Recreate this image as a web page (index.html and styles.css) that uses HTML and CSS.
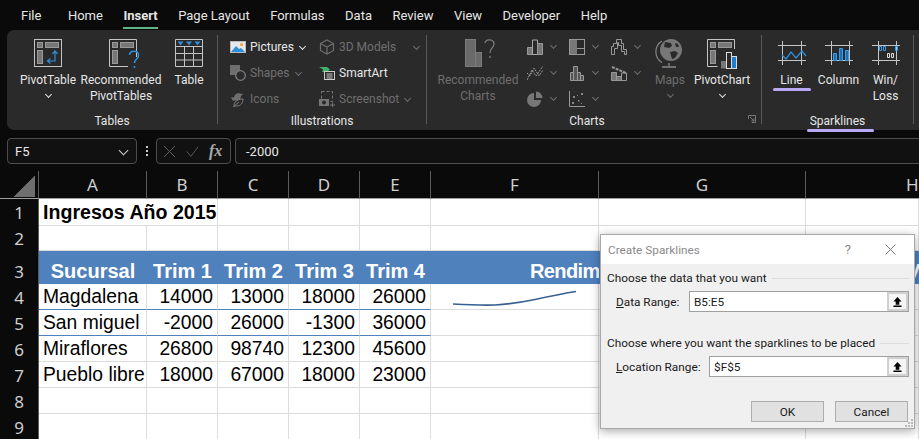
FILE: index.html
```html
<!DOCTYPE html>
<html lang="en">
<head>
    <meta charset="UTF-8">
    <title>Create Sparklines</title>
    <link rel="stylesheet" href="styles.css">
</head>
<body>
    <nav class="tabs">
        <span class="tab tab-file">File</span>
        <span class="tab">Home</span>
        <span class="tab tab-active">Insert</span>
        <span class="tab">Page Layout</span>
        <span class="tab">Formulas</span>
        <span class="tab">Data</span>
        <span class="tab">Review</span>
        <span class="tab">View</span>
        <span class="tab">Developer</span>
        <span class="tab">Help</span>
    </nav>

    <section class="ribbon">
        <div class="group group-tables">
            <div class="group-body">
                <div class="big-btn w-pivot">
                    <svg class="big-icon" viewBox="0 0 28 28"><rect x=".5" y=".5" width="27" height="27" fill="none" stroke="#c4c4c4"/><rect x="3.5" y="3.5" width="5" height="5" fill="#777" stroke="#999"/><rect x="11.5" y="3.5" width="13" height="5" fill="#777" stroke="#999"/><rect x="3.5" y="11.5" width="5" height="13" fill="#777" stroke="#999"/><path d="M21 13v9h-7M18.5 15l2.5-3 2.500 3M16.500 19.500l-3 2.500 3 2.500" fill="none" stroke="#2f8ed8" stroke-width="1.200"/></svg>
                    <span>PivotTable</span>
                    <i class="chev chev-light"></i>
                </div>
                <div class="big-btn w-recommended">
                    <svg class="big-icon icon-wide" viewBox="0 0 32 28"><path d="M27.500 18V.5H.5v27H19" fill="none" stroke="#c4c4c4"/><rect x="3.500" y="3.500" width="5" height="5" fill="#777" stroke="#999"/><rect x="11.500" y="3.500" width="13" height="5" fill="#777" stroke="#999"/><rect x="3.500" y="11.500" width="5" height="13" fill="#777" stroke="#999"/><path d="M20.500 16c.500-5 9-5 9 .5 0 3.500-4 3.500-4 7.500M25.500 27v2" fill="none" stroke="#2f8ed8" stroke-width="1.600"/></svg>
                    <span>Recommended<br>PivotTables</span>
                </div>
                <div class="big-btn w-table">
                    <svg class="big-icon" viewBox="0 0 28 28"><path d="M.5.500h27v27H.5zM.5 7.500h27M.5 14.500h27M.5 21h27M9.500 7.500v20M18.500 7.500v20" fill="none" stroke="#c4c4c4"/><path d="M2.500 2.500h6l-3 4zM11 2.500h6l-3 4zM19.500 2.500h6l-3 4z" fill="#2f8ed8"/></svg>
                    <span>Table</span>
                </div>
            </div>
            <div class="group-label">Tables</div>
        </div>

        <div class="group group-illustrations">
            <div class="group-body">
                <div class="stack stack-illus-1">
                    <div class="small-btn">
                        <svg class="small-icon" viewBox="0 0 16 12"><rect x=".5" y=".5" width="15" height="11" fill="#e8e8e8" stroke="#bbb"/><path d="M1 11l5-6 3 3 2-1 4 4z" fill="#2f8ed8"/><circle cx="11.500" cy="3.500" r="1.500" fill="#e8a33a"/></svg>
                        <span>Pictures</span><i class="chev chev-light"></i>
                    </div>
                    <div class="small-btn muted">
                        <svg class="small-icon" viewBox="0 0 16 16"><rect x="0" y="0" width="10" height="10" fill="#6e6e6e"/><circle cx="10.500" cy="10.500" r="4.800" fill="#2a2a2a" stroke="#7c7c7c" stroke-width="1.300"/></svg>
                        <span>Shapes</span><i class="chev"></i>
                    </div>
                    <div class="small-btn muted">
                        <svg class="small-icon" viewBox="0 0 16 16"><path d="M1 6l3 .500c.500-3 3-5 6-4l3 .500-2 2c0 2-1 4-3 4.500H2.500z" fill="#6e6e6e"/><path d="M4 15c0-4 3-7 9-7 0 4-2 7-6.500 7zM3 16l6-5" fill="#2a2a2a" stroke="#7c7c7c"/></svg>
                        <span>Icons</span>
                    </div>
                </div>
                <div class="stack stack-illus-2">
                    <div class="small-btn muted btn-3d">
                        <svg class="small-icon" viewBox="0 0 16 16"><path d="M8 1l6.500 3.500v7L8 15l-6.500-3.500v-7zM1.500 4.500L8 8l6.500-3.500M8 8v7" fill="none" stroke="#6e6e6e" stroke-width="1.200"/></svg>
                        <span>3D Models</span><i class="chev chev-far"></i>
                    </div>
                    <div class="small-btn">
                        <svg class="small-icon" viewBox="0 0 16 14"><path d="M0 1h8l3 2.500-3 2.500H3l1-2.500z" fill="#3fae6a"/><rect x="5.500" y="5.500" width="10" height="8" fill="#2a2a2a" stroke="#ccc"/><path d="M7.500 8h6M7.500 10h6M7.500 12h6" stroke="#ccc"/></svg>
                        <span>SmartArt</span>
                    </div>
                    <div class="small-btn muted">
                        <svg class="small-icon" viewBox="0 0 16 16"><rect x="2.500" y=".5" width="11" height="10" fill="none" stroke="#777" stroke-dasharray="3 2"/><rect x="0" y="8" width="10" height="7" fill="#777"/><circle cx="5" cy="11.500" r="2" fill="#2a2a2a"/><path d="M11 14h5M13.500 11.500v5" stroke="#777"/></svg>
                        <span>Screenshot</span><i class="chev"></i>
                    </div>
                </div>
            </div>
            <div class="group-label">Illustrations</div>
        </div>

        <div class="group group-charts">
            <div class="group-body">
                <div class="big-btn w-reccharts muted">
                    <svg class="big-icon icon-chart-q" viewBox="0 0 30 28"><rect x=".5" y=".5" width="10" height="27" fill="#6a6a6a" stroke="#7c7c7c"/><rect x="10.500" y="13.500" width="6" height="14" fill="#6a6a6a" stroke="#7c7c7c"/><path d="M20 4c1-4.500 9-4 9 1 0 4-4 4-4 9M25 17v2" fill="none" stroke="#7c7c7c" stroke-width="1.300"/></svg>
                    <span>Recommended<br>Charts</span>
                </div>
                <div class="chart-grid">
                    <div class="chart-btn">
                        <svg class="small-icon" viewBox="0 0 16 16"><path d="M.5 8.500h5v7h-5z" fill="#777" stroke="#999"/><path d="M5.500 1h5v14.500h-5z" fill="none" stroke="#aaa"/><path d="M10.500 4.500h5v11h-5z" fill="#777" stroke="#999"/></svg><i class="chev"></i>
                    </div>
                    <div class="chart-btn">
                        <svg class="small-icon" viewBox="0 0 16 16"><rect x=".5" y=".5" width="15" height="15" fill="none" stroke="#999"/><rect x="1" y="1" width="7" height="14" fill="#777"/><rect x="8" y="9" width="7" height="1" fill="#999"/></svg><i class="chev"></i>
                    </div>
                    <div class="chart-btn">
                        <svg class="small-icon" viewBox="0 0 16 16"><path d="M.5 15.500v-8h2v-3h3v-4h5v4h2v6h3v5h-2v-3h-3v-6h-3v-3h-1v6h-3v6z" fill="none" stroke="#999"/></svg><i class="chev"></i>
                    </div>
                    <div class="chart-btn">
                        <svg class="small-icon" viewBox="0 0 16 16"><path d="M0 15L5 5l4 6 7-10M0 8l3 3 4-8 5 8 4-6" fill="none" stroke="#999" stroke-dasharray="2 1"/></svg><i class="chev"></i>
                    </div>
                    <div class="chart-btn">
                        <svg class="small-icon" viewBox="0 0 16 16"><path d="M1.500 15.500v-8h3v8zM4.500 15.500V1.500h4v14zM8.500 15.500v-8h3v8zM11.500 15.500v-5h3v5z" fill="#555" stroke="#999"/></svg><i class="chev"></i>
                    </div>
                    <div class="chart-btn">
                        <svg class="small-icon" viewBox="0 0 16 16"><path d="M.5 7.500h5v8h-5zM5.500 11.500h5v4h-5z" fill="#777" stroke="#999"/><path d="M10.500 8h5v7.500h-5z" fill="none" stroke="#999"/><path d="M1 2l14 6" stroke="#999" stroke-width="2" stroke-dasharray="3 1"/></svg><i class="chev"></i>
                    </div>
                    <div class="chart-btn">
                        <svg class="small-icon" viewBox="0 0 16 16"><path d="M7 2a7 7 0 1 0 7 7H7z" fill="#777"/><path d="M9 .5a6.500 6.500 0 0 1 6.500 6.500H9z" fill="#777"/></svg><i class="chev"></i>
                    </div>
                    <div class="chart-btn">
                        <svg class="small-icon" viewBox="0 0 16 16"><path d="M.5 0v15.500H16" fill="none" stroke="#999"/><path d="M4 5h2v2H4zM12 2h2v2h-2zM3 11h2v2H3zM9 9h1.500v1.500H9zM8 4h1v1H8zM12 12h1v1h-1z" fill="#888"/></svg><i class="chev"></i>
                    </div>
                </div>
                <div class="big-btn w-maps muted">
                    <svg class="big-icon icon-globe" viewBox="0 0 26 30"><path d="M5 3a12.500 12.500 0 0 0 0 21.500" fill="none" stroke="#888" stroke-width="1.200"/><circle cx="14" cy="12" r="11" fill="#777"/><path d="M8 4l6 1 1 3-3 2-5-1zM13 14l5-1 3 2-3 5-3 1zM18 5l3 1 1 3-3 0z" fill="#2a2a2a"/><path d="M12 25v3M5 29h14" stroke="#888" stroke-width="1.300"/></svg>
                    <span>Maps</span>
                    <i class="chev"></i>
                </div>
                <div class="big-btn w-pchart">
                    <svg class="big-icon icon-pchart" viewBox="0 0 30 30"><path d="M27.500 10V.5H.5v27h10" fill="none" stroke="#c4c4c4"/><rect x="3.500" y="3.500" width="5" height="5" fill="#777" stroke="#999"/><rect x="11.500" y="3.500" width="13" height="5" fill="#777" stroke="#999"/><rect x="3.500" y="11.500" width="5" height="13" fill="#777" stroke="#999"/><rect x="14" y="22" width="5" height="7.500" fill="#777"/><rect x="19.500" y="13.500" width="5" height="16" fill="none" stroke="#ddd"/><rect x="24.500" y="17.500" width="5" height="12" fill="#1f7fcc" stroke="#ddd"/></svg>
                    <span>PivotChart</span>
                    <i class="chev chev-light"></i>
                </div>
            </div>
            <div class="group-label label-charts">Charts</div>
            <svg class="launcher" viewBox="0 0 8 8"><path d="M.5 4V.5H7.500V7.500H4M2 2l4 4M6 3.500V6H3.500" fill="none" stroke="#777"/></svg>
        </div>

        <div class="group group-sparklines">
            <div class="group-body">
                <div class="big-btn w-spark btn-line">
                    <svg class="big-icon spark-icon" viewBox="0 0 28 24"><path d="M0 4.500h28M0 19.500h28M4.500 0v24M23.500 0v24" stroke="#c4c4c4" fill="none"/><path d="M4 14l4 4 5-7 5 6 6-7 4 5" fill="none" stroke="#2f8ed8" stroke-width="1.300"/></svg>
                    <span>Line</span>
                    <i class="mark mark-line"></i>
                </div>
                <div class="big-btn w-spark">
                    <svg class="big-icon spark-icon" viewBox="0 0 28 24"><path d="M0 4.500h28M0 19.500h28M6.500 0v24M24.500 0v24" stroke="#c4c4c4" fill="none"/><path d="M8.500 12.500h3v7h-3zM14.500 7.500h3v12h-3zM20.500 9.500h3v10h-3z" fill="#1c6fb4" stroke="#3a9be6"/></svg>
                    <span>Column</span>
                </div>
                <div class="big-btn w-spark">
                    <svg class="big-icon spark-icon" viewBox="0 0 28 24"><path d="M0 4.500h28M0 19.500h28M6.500 0v24M24.500 0v24" stroke="#c4c4c4" fill="none"/><path d="M7.500 5.500h2v4h-2zM11.500 5.500h2v4h-2zM23.500 5.500h2v4h-2z" fill="none" stroke="#3a9be6"/><path d="M15.500 12.500h2v4h-2zM19.500 12.500h2v4h-2z" fill="none" stroke="#ddd"/></svg>
                    <span>Win/<br>Loss</span>
                </div>
            </div>
            <div class="group-label label-sparklines">Sparklines<i class="mark mark-label"></i></div>
        </div>
    </section>

    <div class="formula-bar">
        <div class="name-box"><span>F5</span><i class="chev chev-name"></i></div>
        <div class="bar-dots"><i></i><i></i><i></i></div>
        <div class="func-box">
            <svg class="func-icon" viewBox="0 0 14 14"><path d="M1 1l12 12M13 1L1 13" stroke="#666" fill="none"/></svg>
            <svg class="func-icon" viewBox="0 0 16 14"><path d="M1 7l5 6L15 1" stroke="#666" fill="none"/></svg>
            <span class="fx">fx</span>
        </div>
        <div class="formula-input">-2000</div>
    </div>

    <table class="sheet">
        <colgroup>
            <col class="c-head"><col class="c-a"><col class="c-n"><col class="c-n"><col class="c-n"><col class="c-n"><col class="c-f"><col class="c-g"><col class="c-h">
        </colgroup>
        <tr class="r-cols">
            <th class="corner"><i class="corner-mark"></i></th><th>A</th><th>B</th><th>C</th><th>D</th><th>E</th><th>F</th><th>G</th><th class="col-h">H</th>
        </tr>
        <tr class="r-1">
            <th class="rh">1</th><td class="title" colspan="2">Ingresos Año 2015</td><td></td><td></td><td></td><td></td><td></td><td></td>
        </tr>
        <tr class="r-2">
            <th class="rh">2</th><td></td><td></td><td></td><td></td><td></td><td></td><td></td><td></td>
        </tr>
        <tr class="r-3">
            <th class="rh">3</th><td>Sucursal</td><td>Trim 1</td><td>Trim 2</td><td>Trim 3</td><td>Trim 4</td><td class="rend">Rendim</td><td></td><td class="next-head">V</td>
        </tr>
        <tr class="line-blue">
            <th class="rh">4</th><td>Magdalena</td><td class="num">14000</td><td class="num">13000</td><td class="num">18000</td><td class="num">26000</td>
            <td class="spark-cell"><svg class="sparkline" viewBox="0 0 128 20"><path d="M2 17C20 18 30 18.500 44 18 60 17 72 15 84 12.500 100 9 112 6.500 125 4.500" fill="none" stroke="#376092" stroke-width="1.600"/></svg></td><td></td><td></td>
        </tr>
        <tr class="line-blue">
            <th class="rh">5</th><td>San miguel</td><td class="num">-2000</td><td class="num">26000</td><td class="num">-1300</td><td class="num">36000</td><td></td><td></td><td></td>
        </tr>
        <tr>
            <th class="rh">6</th><td>Miraflores</td><td class="num">26800</td><td class="num">98740</td><td class="num">12300</td><td class="num">45600</td><td></td><td></td><td></td>
        </tr>
        <tr>
            <th class="rh">7</th><td>Pueblo libre</td><td class="num">18000</td><td class="num">67000</td><td class="num">18000</td><td class="num">23000</td><td></td><td></td><td></td>
        </tr>
        <tr>
            <th class="rh">8</th><td></td><td></td><td></td><td></td><td></td><td></td><td></td><td></td>
        </tr>
        <tr>
            <th class="rh">9</th><td></td><td></td><td></td><td></td><td></td><td></td><td></td><td></td>
        </tr>
    </table>

    <div class="dialog">
        <header class="dialog-title">
            <span class="dialog-name">Create Sparklines</span>
            <span class="dialog-help">?</span>
            <svg class="dialog-close" viewBox="0 0 11 11"><path d="M.5.500l10 10M10.500.500l-10 10" stroke="#777" fill="none"/></svg>
        </header>
        <div class="dialog-body">
            <div class="legend"><span>Choose the data that you want</span><i></i></div>
            <div class="field field-data">
                <label>Data Range:</label>
                <div class="range"><span>B5:E5</span>
                    <div class="range-btn"><svg viewBox="0 0 10 11"><path d="M5 0l4.500 5H7v3.500H3V5H.5zM.5 9.500h9V11h-9z" fill="#000"/></svg></div>
                </div>
            </div>
            <div class="legend legend-2"><span>Choose where you want the sparklines to be placed</span><i></i></div>
            <div class="field field-location">
                <label>Location Range:</label>
                <div class="range"><span>$F$5</span>
                    <div class="range-btn"><svg viewBox="0 0 10 11"><path d="M5 0l4.500 5H7v3.500H3V5H.5zM.5 9.500h9V11h-9z" fill="#000"/></svg></div>
                </div>
            </div>
            <div class="dialog-actions">
                <button class="dlg-btn">OK</button>
                <button class="dlg-btn">Cancel</button>
            </div>
        </div>
        <svg class="grip" viewBox="0 0 8 8"><path d="M6 0h2v2H6zM3 3h2v2H3zM6 3h2v2H6zM0 6h2v2H0zM3 6h2v2H3zM6 6h2v2H6z" fill="#bbb"/></svg>
    </div>
</body>
</html>
```

FILE: styles.css
```css
html, body {
    margin: 0;
    padding: 0;
    height: 439px;
    overflow: hidden;
    background-color: #0a0a0a;
    font-family: Roboto, "Noto Sans", sans-serif;
    font-size: 12px;
    color: #e6e6e6;
}

i {
    display: block;
}

/* tabs */
.tabs {
    display: flex;
    gap: 20.500px;
    height: 30px;
    padding-left: 21px;
    align-items: center;
    font-size: 13px;
}

.tab {
    position: relative;
}

.tab-file {
    margin-right: 6px;
}

.tab-active {
    font-weight: 700;
}

.tab-active::after {
    content: "";
    position: absolute;
    left: 0;
    right: 0;
    bottom: -6px;
    height: 2px;
    background-color: #5fb585;
}

/* ribbon */
.ribbon {
    display: flex;
    height: 89px;
    margin-left: 7px;
    padding: 5px 0 6px;
    background-color: #2a2a2a;
    border-radius: 7px 0 0 7px;
}

.group {
    position: relative;
    display: flex;
    flex-direction: column;
    box-sizing: content-box;
    border-right: 1px solid #5a5a5a;
}

.group-tables { width: 210px; }
.group-illustrations { width: 208px; }
.group-charts { width: 334px; }
.group-sparklines { width: 151px; }

.group-body {
    display: flex;
    flex: 1;
    height: 78px;
}

.group-tables .group-body { padding-left: 11px; }
.group-illustrations .group-body { padding-left: 12px; }
.group-charts .group-body { padding-left: 6px; }
.group-sparklines .group-body { padding-left: 6px; }

.group-label {
    position: relative;
    height: 16px;
    margin-bottom: -5px;
    line-height: 16px;
    text-align: center;
    white-space: nowrap;
}

.label-charts { padding-right: 14px; }

.big-btn {
    position: relative;
    display: flex;
    flex-direction: column;
    align-items: center;
    padding-top: 4px;
    line-height: 16px;
    text-align: center;
    white-space: nowrap;
}

.big-icon {
    display: block;
    width: 28px;
    height: 28px;
    margin-bottom: 5px;
    overflow: visible;
}

.icon-wide { width: 32px; margin-left: 8px; }
.icon-chart-q { width: 30px; margin-left: 3px; }
.icon-globe { width: 26px; height: 30px; margin-top: -1px; margin-bottom: 4px; }
.icon-pchart { width: 30px; height: 30px; margin-bottom: 3px; }
.spark-icon { height: 24px; margin-top: 2px; margin-bottom: 7px; }

.w-pivot { width: 60px; }
.w-recommended { width: 86px; }
.w-table { width: 50px; }
.w-reccharts { width: 90px; }
.w-maps { width: 38px; }
.w-pchart { width: 66px; }
.w-spark { width: 47px; }

.muted {
    color: #6f6f6f;
}

.stack {
    display: flex;
    flex-direction: column;
    gap: 2px;
}

.stack-illus-1 { width: 89px; }

.small-btn {
    display: flex;
    align-items: center;
    gap: 4px;
    height: 24px;
    white-space: nowrap;
}

.small-icon {
    display: block;
    width: 16px;
    height: 16px;
    flex: none;
}

.chart-grid {
    display: grid;
    grid-template-columns: 42px 42px 42px;
    grid-template-rows: 24px 24px 24px;
    row-gap: 2px;
    margin-left: 2px;
}

.chart-btn {
    display: flex;
    align-items: center;
    gap: 6px;
    padding-left: 2px;
    margin-top: -1px;
}

.chev {
    flex: none;
    width: 4px;
    height: 4px;
    margin: -2px 2px 0;
    border-right: 1px solid #6f6f6f;
    border-bottom: 1px solid #6f6f6f;
    transform: rotate(45deg);
}

.chev-light {
    border-color: #e0e0e0;
}

.big-btn .chev {
    margin-top: 4px;
}

.chev-far {
    margin-left: 14px;
}

.launcher {
    position: absolute;
    right: 5px;
    bottom: 1px;
    width: 8px;
    height: 8px;
}

.mark {
    position: absolute;
    height: 3px;
    background-color: #b9a8f6;
    border-radius: 2px;
}

.mark-line {
    left: 5px;
    right: 4px;
    top: 53px;
}

.mark-label {
    left: 45px;
    width: 67px;
    top: 16px;
}

/* formula bar */
.formula-bar {
    display: flex;
    align-items: center;
    height: 26px;
    margin-top: 8px;
    padding-left: 7px;
    font-size: 13px;
}

.name-box, .func-box, .formula-input {
    display: flex;
    align-items: center;
    box-sizing: border-box;
    height: 26px;
    border: 1px solid #4d4d4d;
    border-radius: 4px;
    background-color: #111;
}

.name-box {
    width: 130px;
    padding: 0 7px;
    justify-content: space-between;
}

.chev-name {
    width: 6px;
    height: 6px;
    border-color: #ccc;
    margin-right: 2px;
}

.bar-dots {
    display: flex;
    flex-direction: column;
    gap: 2px;
    width: 19px;
    align-items: center;
}

.bar-dots i {
    width: 2px;
    height: 2px;
    background-color: #ccc;
}

.func-box {
    width: 75px;
    padding-left: 6px;
    gap: 10px;
}

.func-icon {
    width: 13px;
    height: 13px;
}

.fx {
    font-family: "Liberation Serif", serif;
    font-style: italic;
    font-weight: 700;
    font-size: 16px;
    color: #aaa;
}

.formula-input {
    flex: 1;
    margin-left: 4px;
    padding-left: 10px;
    border-right: none;
    border-radius: 4px 0 0 4px;
}

/* sheet */
.sheet {
    table-layout: fixed;
    width: 919px;
    margin-top: 7px;
    border-collapse: separate;
    border-spacing: 0;
    font-family: "Liberation Sans", Arial, sans-serif;
    font-size: 19.300px;
    color: #000;
}

.c-head { width: 39px; }
.c-a { width: 108px; }
.c-n { width: 71px; }
.c-f { width: 168px; }
.c-g { width: 207px; }
.c-h { width: 113px; }

.sheet tr { height: 26px; }
.sheet .r-cols { height: 28px; }
.sheet .r-1 { height: 27px; }
.sheet .r-2 { height: 25px; }
.sheet .r-3 { height: 33px; }

.sheet th {
    padding: 0;
    box-sizing: border-box;
    font-family: "Noto Sans", sans-serif;
    font-size: 17px;
    font-weight: 400;
    color: #cfcfcf;
    background-color: #0a0a0a;
}

.r-cols th {
    border-right: 1px solid #5a5a5a;
    border-bottom: 1px solid #a0a0a0;
}

.sheet .col-h {
    padding-left: 100px;
    text-align: left;
    overflow: hidden;
    border-right: none;
}

.corner {
    position: relative;
}

.corner-mark {
    position: absolute;
    left: 14px;
    top: 5px;
    width: 21px;
    height: 21px;
    background: linear-gradient(135deg, transparent 50%, #6e6e6e 50%);
}

.sheet .rh {
    border-right: 1px solid #5a5a5a;
}

.sheet td {
    box-sizing: border-box;
    padding: 1px 4px 0;
    white-space: nowrap;
    overflow: hidden;
    background-color: #fff;
    border-right: 1px solid #dcdcdc;
    border-bottom: 1px solid #dcdcdc;
}

.sheet .title {
    font-size: 19.600px;
    font-weight: 700;
}

.sheet .r-3 td, .sheet .r-3 th {
    padding-top: 8px;
}

.r-3 td {
    background-color: #4f81bd;
    border: none;
    color: #fff;
    font-size: 20px;
    font-weight: 700;
    text-align: center;
}

.sheet .rend {
    padding-left: 99px;
    padding-right: 0;
    letter-spacing: -0.600px;
    text-align: left;
}

.sheet .next-head {
    padding-left: 101px;
    text-align: left;
}

.sheet .num {
    padding-right: 4px;
    text-align: right;
}

.line-blue td:nth-child(-n+6) {
    border-bottom-color: #4f81bd;
}

.spark-cell {
    padding-left: 20px !important;
    overflow: visible;
}

.sparkline {
    display: block;
    width: 128px;
    height: 20px;
}

/* dialog */
.dialog {
    position: absolute;
    left: 600px;
    top: 234px;
    width: 315px;
    height: 195px;
    box-sizing: border-box;
    display: flex;
    flex-direction: column;
    background-color: #f0f0f0;
    border: 1px solid #a8a8a8;
    box-shadow: 0 2px 9px rgba(0, 0, 0, 0.35);
    color: #1a1a1a;
    font-size: 11.800px;
}

.dialog-title {
    display: flex;
    align-items: center;
    height: 29px;
    flex: none;
    padding: 0 18px 0 7px;
    background-color: #fff;
}

.dialog-name {
    flex: 1;
    color: #8a8a8a;
}

.dialog-help {
    margin-right: 34px;
    font-size: 13px;
    color: #8a8a8a;
}

.dialog-close {
    width: 11px;
    height: 11px;
}

.dialog-body {
    display: flex;
    flex-direction: column;
    flex: 1;
    padding: 6px 5px 0 6px;
}

.legend {
    display: flex;
    align-items: center;
    gap: 5px;
    height: 16px;
    white-space: nowrap;
}

.legend i {
    flex: 1;
    height: 1px;
    background-color: #dcdcdc;
}

.legend-2 {
    margin-top: 23px;
}

.field {
    display: flex;
    align-items: center;
    justify-content: space-between;
    height: 21px;
    margin-top: 5px;
    padding-left: 9px;
}

.field label::first-letter {
    text-decoration: underline;
}

.range {
    display: flex;
    align-items: center;
    justify-content: space-between;
    box-sizing: border-box;
    height: 21px;
    padding-left: 4px;
    background-color: #fff;
    border: 1px solid #a0a0a0;
}

.field-data .range { width: 220px; }
.field-location .range { width: 200px; }

.range-btn {
    display: flex;
    align-items: center;
    justify-content: center;
    box-sizing: border-box;
    width: 21px;
    height: 19px;
    background-color: #f5f5f5;
    border: 2px solid #d0d0d0;
}

.range-btn svg {
    width: 9px;
    height: 10px;
}

.dialog-actions {
    display: flex;
    justify-content: flex-end;
    gap: 11px;
    margin-top: 24px;
    padding-right: 1px;
}

.dlg-btn {
    width: 73px;
    height: 21px;
    padding: 0;
    background-color: #e1e1e1;
    border: 1px solid #adadad;
    font-family: inherit;
    font-size: 11.800px;
    color: #1a1a1a;
}

.grip {
    position: absolute;
    right: 1px;
    bottom: 1px;
    width: 8px;
    height: 8px;
}
```
